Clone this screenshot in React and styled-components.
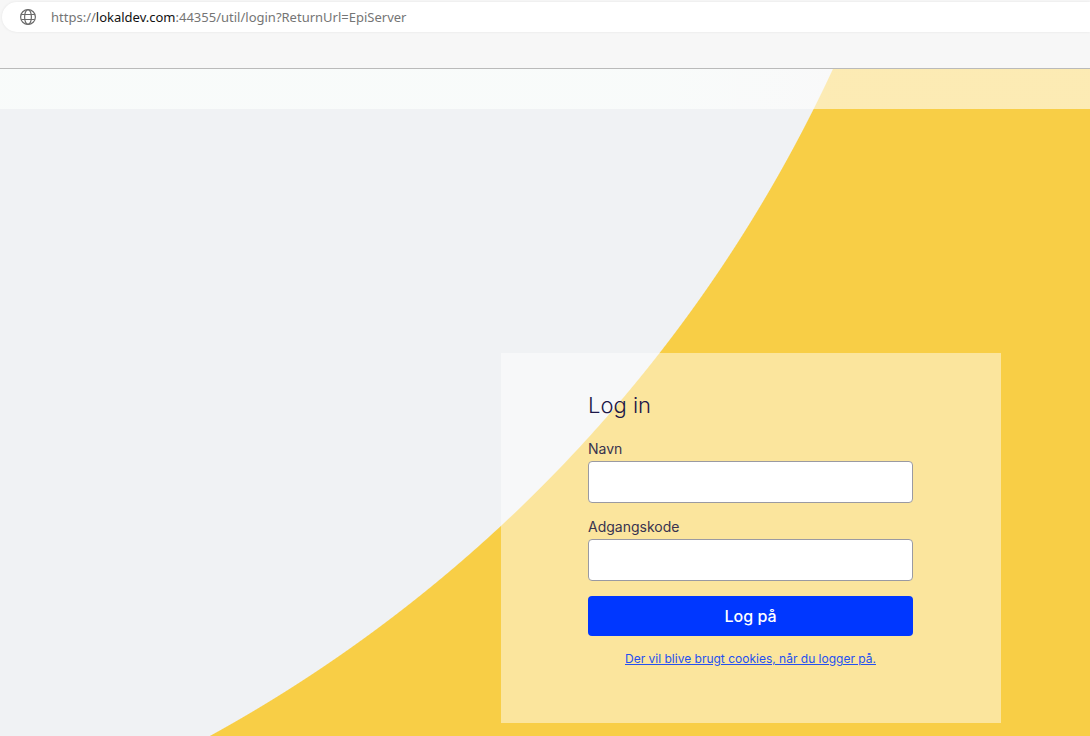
import React from "react";
import styled, { createGlobalStyle } from "styled-components";

const GlobalStyle = createGlobalStyle`
  *, *::before, *::after { box-sizing: border-box; }
  body { margin: 0; font-family: Inter, "Liberation Sans", sans-serif; }
`;

const Shell = styled.div`
  display: flex;
  flex-direction: column;
  min-height: 100vh;
  background: #f7f7f7;
`;

const Toolbar = styled.header`
  height: 69px;
  padding: 2px 0 0 2px;
  border-bottom: 1px solid #bababa;
`;

const AddressBar = styled.div`
  display: flex;
  align-items: center;
  gap: 15px;
  height: 30px;
  padding-left: 18px;
  background: #ffffff;
  border-radius: 15px 0 0 15px;
  box-shadow: 0 0 3px rgba(0, 0, 0, 0.08);
`;

const Address = styled.span`
  color: #757575;
  font-family: "Noto Sans", "Open Sans", sans-serif;
  font-size: 13px;
  line-height: 20px;
  white-space: nowrap;
`;

const Host = styled.span`
  color: #111111;
`;

const Page = styled.main`
  flex: 1;
  display: flex;
  flex-direction: column;
  background: radial-gradient(circle at -494px -615px, #f0f2f4 1462px, #f8ce46 1463px);
`;

const Banner = styled.div`
  height: 40px;
  background: linear-gradient(to right, rgba(252, 255, 253, 0.7) 60%, rgba(255, 254, 253, 0.6) 76%);
`;

const Panel = styled.section`
  width: 500px;
  max-width: 100%;
  margin: 244px 89px 13px auto;
  padding: 36px 88px 56px 87px;
  background: rgba(255, 255, 255, 0.47);
`;

const Form = styled.form`
  display: flex;
  flex-direction: column;
`;

const Title = styled.h1`
  margin: 0 0 19px;
  color: #1c1748;
  font-size: 22px;
  font-weight: 300;
  line-height: 32px;
`;

const Field = styled.div`
  display: flex;
  flex-direction: column;
  margin-bottom: 15px;
`;

const Label = styled.label`
  margin-bottom: 3px;
  color: #38334f;
  font-size: 14px;
  line-height: 18px;
`;

const Input = styled.input`
  height: 42px;
  padding: 0 12px;
  border: 1px solid #9a9aa2;
  border-radius: 4px;
  background: #ffffff;
  font: 16px Inter, sans-serif;
`;

const Submit = styled.button`
  height: 40px;
  margin-bottom: 15px;
  border: 0;
  border-radius: 4px;
  background: #0037ff;
  color: #ffffff;
  font: 500 16px Inter, sans-serif;
  cursor: pointer;
`;

const CookieLink = styled.a`
  align-self: center;
  color: #2450f0;
  font-size: 12px;
  font-weight: 400;
  line-height: 16px;
`;

function GlobeIcon() {
  return (
    <svg width="16" height="16" viewBox="0 0 16 16" fill="none" stroke="#6b6b6b" strokeWidth="1.2" aria-hidden="true">
      <circle cx="8" cy="8" r="7.4" />
      <ellipse cx="8" cy="8" rx="3.4" ry="7.4" />
      <path d="M1.2 5.5h13.6M1.2 10.5h13.6" />
    </svg>
  );
}

function TextField({ id, label, type }) {
  return (
    <Field>
      <Label htmlFor={id}>{label}</Label>
      <Input id={id} name={id} type={type} />
    </Field>
  );
}

export default function App() {
  return (
    <>
      <GlobalStyle />
      <Shell>
        <Toolbar>
          <AddressBar>
            <GlobeIcon />
            <Address>
              https://<Host>lokaldev.com</Host>:44355/util/login?ReturnUrl=EpiServer
            </Address>
          </AddressBar>
        </Toolbar>
        <Page>
          <Banner />
          <Panel>
            <Form onSubmit={(event) => event.preventDefault()}>
              <Title>Log in</Title>
              <TextField id="username" label="Navn" type="text" />
              <TextField id="password" label="Adgangskode" type="password" />
              <Submit type="submit">Log på</Submit>
              <CookieLink href="#cookies">Der vil blive brugt cookies, når du logger på.</CookieLink>
            </Form>
          </Panel>
        </Page>
      </Shell>
    </>
  );
}
